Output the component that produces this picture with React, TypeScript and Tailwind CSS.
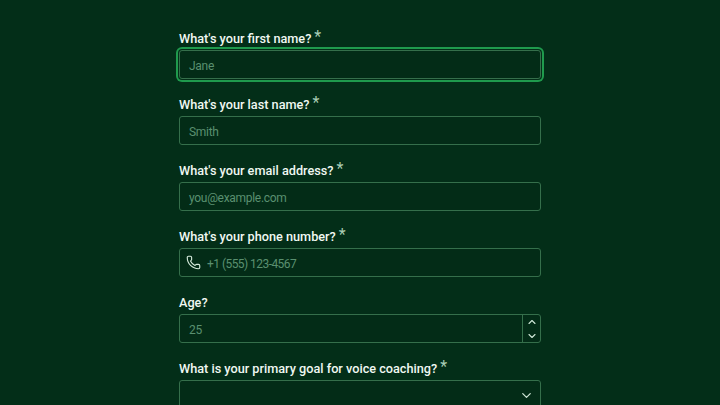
import { Phone, ChevronUp, ChevronDown } from "lucide-react";

const inputBox =
  "h-[29px] w-full rounded-[3px] border border-[#356f4b] bg-[#032c17] flex items-center text-[12px] text-[#5a9070] tracking-[-0.3px]";

function Label({ text, required }: { text: string; required?: boolean }) {
  return (
    <div className="h-[16px] pt-[2px] flex items-center text-[12.7px] font-medium text-[#f0f8f2]">
      <span>{text}</span>
      {required && (
        <span className="ml-[3px] -mt-[5px] text-[16px] leading-none font-normal text-[#a9cdb4]">*</span>
      )}
    </div>
  );
}

export default function App() {
  return (
    <div
      className="h-[405px] w-[720px] overflow-hidden bg-[#032e18]"
      style={{ fontFamily: "Roboto, sans-serif" }}
    >
      <div className="mx-auto flex w-[362px] flex-col gap-[17px] pt-[30px]">
        <div className="flex flex-col gap-[4px]">
          <Label text="What's your first name?" required />
          <div className={inputBox + " px-[9px] border-[#2aa456] ring-2 ring-[#1f9a4d] ring-offset-1 ring-offset-[#032e18]"}>
            <span className="pt-[2px]">Jane</span>
          </div>
        </div>
        <div className="flex flex-col gap-[4px]">
          <Label text="What's your last name?" required />
          <div className={inputBox + " px-[9px]"}>
            <span className="pt-[2px]">Smith</span>
          </div>
        </div>
        <div className="flex flex-col gap-[4px]">
          <Label text="What's your email address?" required />
          <div className={inputBox + " px-[9px]"}>
            <span className="pt-[2px]">you@example.com</span>
          </div>
        </div>
        <div className="flex flex-col gap-[4px]">
          <Label text="What's your phone number?" required />
          <div className={inputBox + " px-[6px] gap-[6px]"}>
            <Phone size={15} strokeWidth={1.8} className="text-[#d5eadb]" />
            <span className="pt-[2px] tracking-[-0.55px]">+1 (555) 123-4567</span>
          </div>
        </div>
        <div className="flex flex-col gap-[4px]">
          <Label text="Age?" />
          <div className={inputBox + " pl-[9px]"}>
            <span className="flex-1 pt-[2px]">25</span>
            <div className="flex h-full w-[18px] flex-col items-center justify-center border-l border-[#356f4b] text-[#cfe6d6]">
              <ChevronUp size={12} strokeWidth={2.2} />
              <ChevronDown size={12} strokeWidth={2.2} className="mt-[2px]" />
            </div>
          </div>
        </div>
        <div className="flex flex-col gap-[4px]">
          <Label text="What is your primary goal for voice coaching?" required />
          <div className={inputBox + " justify-end pr-[6px]"}>
            <ChevronDown size={15} strokeWidth={2} className="mt-[2px] text-[#cfe6d6]" />
          </div>
        </div>
      </div>
    </div>
  );
}
